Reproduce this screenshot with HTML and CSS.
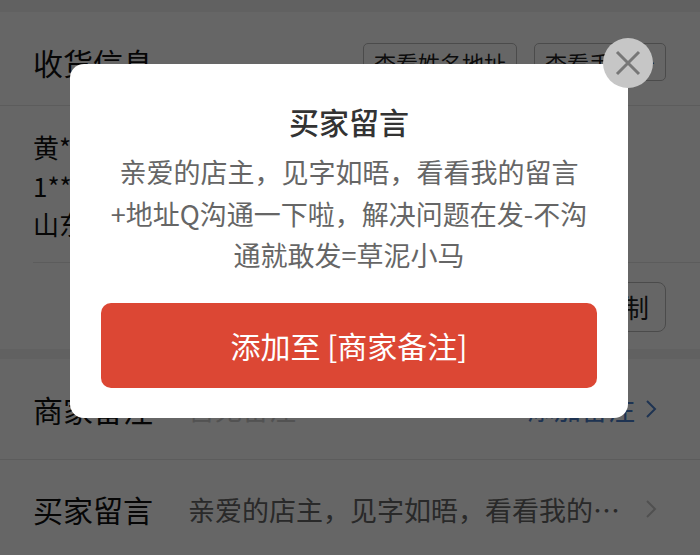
FILE: index.html
```html
<!DOCTYPE html>
<html lang="zh-CN">
<head>
  <meta charset="UTF-8" />
  <meta name="viewport" content="width=device-width, initial-scale=1.0"/>
  <title>订单详情</title>
  <link rel="stylesheet" href="styles.css">
</head>
<body>
  <div class="page">
    <!-- 收货信息 -->
    <section class="card">
      <div class="card-head">
        <h3 class="card-title">收货信息</h3>
        <div class="head-actions">
          <button class="ghost-btn">查看姓名地址</button>
          <button class="ghost-btn">查看手机号</button>
        </div>
      </div>
      <div class="address">
        <p>黄**</p>
        <p>1**********</p>
        <p>山东省**市**区</p>
      </div>
      <div class="address-foot">
        <button class="ghost-btn copy-btn">复制</button>
      </div>
    </section>

    <!-- 备注 / 留言 -->
    <section class="card">
      <div class="row">
        <span class="row-label">商家备注</span>
        <span class="row-value muted">暂无备注</span>
        <span class="row-link">添加备注</span>
        <svg class="chevron blue" viewBox="0 0 12 20" width="12" height="20"><path d="M2 2l8 8-8 8" /></svg>
      </div>
      <div class="row">
        <span class="row-label">买家留言</span>
        <span class="row-value">亲爱的店主，见字如晤，看看我的留言+地址Q沟通一下啦</span>
        <svg class="chevron" viewBox="0 0 12 20" width="12" height="20"><path d="M2 2l8 8-8 8" /></svg>
      </div>
    </section>
  </div>

  <!-- 买家留言弹窗 -->
  <div class="mask">
    <div class="dialog">
      <button class="dialog-close" aria-label="关闭">
        <svg viewBox="0 0 26 26" width="26" height="26"><path d="M2 2l22 22M24 2L2 24" /></svg>
      </button>
      <h2 class="dialog-title">买家留言</h2>
      <p class="dialog-text">亲爱的店主，见字如晤，看看我的留言+地址Q沟通一下啦，解决问题在发-不沟通就敢发=草泥小马</p>
      <button class="dialog-btn">添加至 [商家备注]</button>
    </div>
  </div>
</body>
</html>
```

FILE: styles.css
```css
/* Base */
html, body {
  margin: 0;
  padding: 0;
}
body {
  width: 700px;
  height: 555px;
  overflow: hidden;
  background-color: #f2f2f2;
  font-family: "Noto Sans CJK SC", sans-serif;
  color: #111;
}
button {
  font-family: inherit;
}
p {
  margin: 0;
}

/* Page */
.page {
  padding-top: 12px;
}
.card {
  background-color: #fff;
  margin-bottom: 10px;
}

/* 收货信息 header */
.card-head {
  height: 94px;
  box-sizing: border-box;
  padding: 6px 34px 0 33px;
  display: flex;
  align-items: center;
  justify-content: space-between;
  border-bottom: 1px solid #e6e6e6;
}
.card-title {
  margin: 0;
  font-size: 30px;
  font-weight: normal;
  line-height: 1;
}
.head-actions {
  display: flex;
  gap: 17px;
}
.ghost-btn {
  height: 38px;
  padding: 0 10px;
  font-size: 22px;
  color: #222;
  background: #fff;
  border: 1px solid #bbb;
  border-radius: 5px;
}

/* Address */
.address {
  margin: 0 0 0 33px;
  padding: 22px 0 18px;
  font-size: 26px;
  line-height: 38.5px;
  border-bottom: 1px solid #e6e6e6;
}
.address-foot {
  display: flex;
  justify-content: flex-end;
  padding: 19px 34px 17px;
}
.copy-btn {
  height: 50px;
  padding: 0 16px;
  font-size: 26px;
  border-radius: 8px;
}

/* Rows */
.row {
  height: 100px;
  box-sizing: border-box;
  padding: 0 43px 0 33px;
  display: flex;
  align-items: center;
}
.row + .row {
  border-top: 1px solid #e6e6e6;
}
.row-label {
  width: 155px;
  flex-shrink: 0;
  font-size: 30px;
}
.row-value {
  flex: 1;
  min-width: 0;
  font-size: 27px;
  color: #666;
  white-space: nowrap;
  overflow: hidden;
  text-overflow: ellipsis;
  margin-right: 14px;
}
.row-value.muted {
  color: #ccc;
}
.row-link {
  font-size: 27px;
  color: #4c7fcc;
  margin-right: 10px;
}
.chevron {
  flex-shrink: 0;
}
.chevron path {
  fill: none;
  stroke: #c8c8c8;
  stroke-width: 2;
}
.chevron.blue path {
  stroke: #4c7fcc;
}

/* Mask + dialog */
.mask {
  position: fixed;
  inset: 0;
  background-color: rgba(0, 0, 0, 0.6);
  display: flex;
  justify-content: center;
  align-items: flex-start;
  padding-top: 64px;
}
.dialog {
  position: relative;
  width: 558px;
  box-sizing: border-box;
  margin-left: -2px;
  padding: 36px 31px 30px;
  background-color: #fff;
  border-radius: 14px;
  text-align: center;
}
.dialog-close {
  position: absolute;
  top: -26px;
  right: -25px;
  width: 50px;
  height: 50px;
  padding: 0;
  border: none;
  border-radius: 50%;
  background-color: #c6c6c6;
  display: flex;
  align-items: center;
  justify-content: center;
}
.dialog-close path {
  fill: none;
  stroke: #777;
  stroke-width: 3;
}
.dialog-title {
  margin: 0;
  font-size: 30px;
  line-height: 42px;
  font-weight: 500;
  color: #333;
}
.dialog-text {
  margin-top: 9px;
  font-size: 27px;
  line-height: 41.5px;
  color: #666;
}
.dialog-btn {
  display: block;
  width: 100%;
  height: 85px;
  margin-top: 27px;
  border: none;
  border-radius: 10px;
  background-color: #dc4734;
  color: #fff;
  font-size: 30px;
}
```
